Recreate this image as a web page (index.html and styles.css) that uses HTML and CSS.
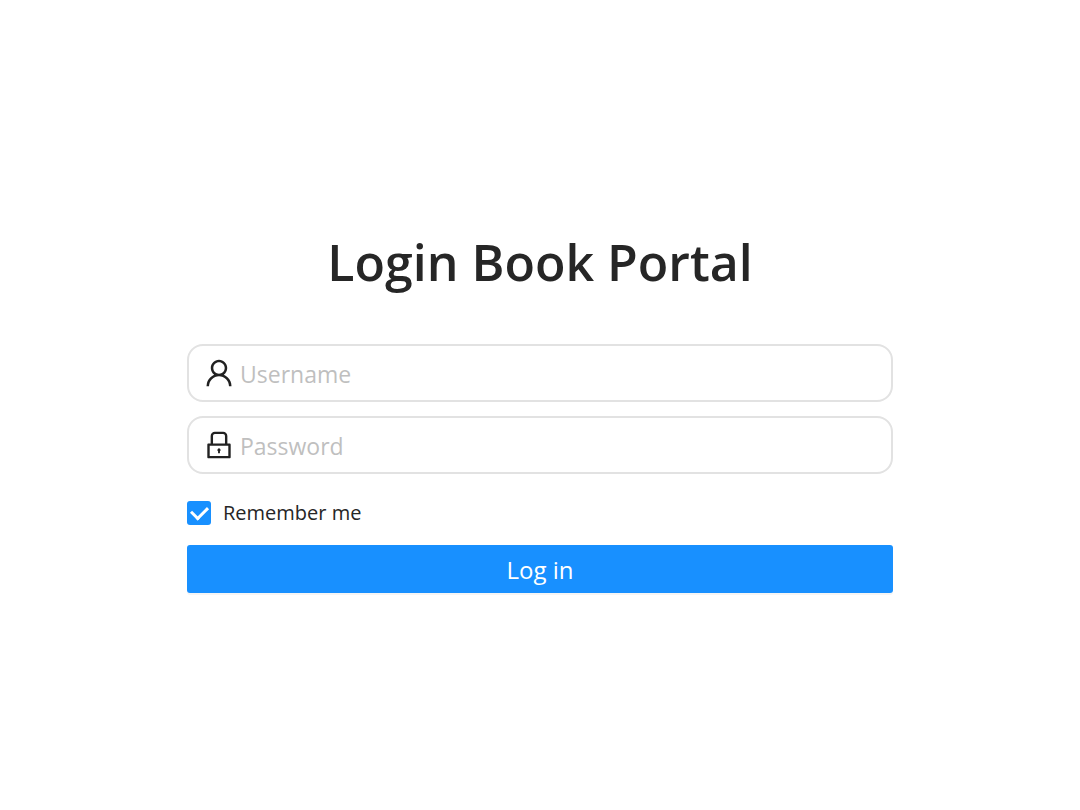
FILE: index.html
```html
<!DOCTYPE html>
<html lang="en">
<head>
<meta charset="utf-8">
<meta name="viewport" content="width=device-width, initial-scale=1">
<title>Login Book Portal</title>
<link rel="stylesheet" href="styles.css">
</head>
<body>
<main class="login">
  <h1 class="title">Login Book Portal</h1>
  <form class="form">
    <div class="field">
      <svg class="icon" viewBox="0 0 1024 1024" aria-hidden="true"><path d="M858.5 763.6a374 374 0 00-80.6-119.5 375.63 375.63 0 00-119.5-80.6c-.4-.2-.8-.3-1.2-.5C719.5 518 760 444.7 760 362c0-137-111-248-248-248S264 225 264 362c0 82.7 40.5 156 102.8 201.1-.4.2-.8.3-1.2.5-44.8 18.9-85 46-119.5 80.6a375.63 375.63 0 00-80.6 119.5A371.7 371.7 0 00136 901.8a8 8 0 008 8.2h60c4.4 0 7.9-3.5 8-7.8 2-77.2 33-149.5 87.8-204.3 56.7-56.7 132-87.9 212.2-87.9s155.5 31.2 212.2 87.9C779 752.7 810 825 812 902.2c.1 4.4 3.6 7.8 8 7.8h60a8 8 0 008-8.2c-1-47.8-10.9-94.3-29.5-138.2zM512 534c-45.9 0-89.1-17.9-121.6-50.4S340 407.9 340 362c0-45.9 17.9-89.1 50.4-121.6S466.1 190 512 190s89.1 17.9 121.6 50.4S684 316.1 684 362c0 45.9-17.9 89.1-50.4 121.6S557.9 534 512 534z"/></svg>
      <input class="input" type="text" name="username" placeholder="Username" aria-label="Username">
    </div>
    <div class="field">
      <svg class="icon" viewBox="0 0 1024 1024" aria-hidden="true"><path d="M832 464h-68V240c0-70.7-57.3-128-128-128H388c-70.7 0-128 57.3-128 128v224h-68c-17.7 0-32 14.3-32 32v384c0 17.7 14.3 32 32 32h640c17.7 0 32-14.3 32-32V496c0-17.7-14.3-32-32-32zM332 240c0-30.9 25.1-56 56-56h248c30.9 0 56 25.1 56 56v224H332V240zm460 600H232V536h560v304zM484 701v53c0 4.4 3.6 8 8 8h40c4.4 0 8-3.6 8-8v-53a48.1 48.1 0 10-56 0z"/></svg>
      <input class="input" type="password" name="password" placeholder="Password" aria-label="Password">
    </div>
    <div class="remember">
      <input class="checkbox" type="checkbox" id="remember" checked>
      <label for="remember">Remember me</label>
    </div>
    <button class="submit" type="submit">Log in</button>
  </form>
</main>
</body>
</html>
```
FILE: styles.css
```css
* {
  box-sizing: border-box;
}

body {
  margin: 0;
  background: #fff;
  color: #262626;
  font-family: "Segoe UI", "Open Sans", "Noto Sans", sans-serif;
}

.login {
  display: flex;
  flex-direction: column;
  align-items: center;
  justify-content: center;
  gap: 46px;
  min-height: 100vh;
  padding: 28px 24px 20px;
}

.title {
  margin: 0;
  font-size: 50px;
  font-weight: 600;
  line-height: 72px;
  text-align: center;
}

.form {
  display: flex;
  flex-direction: column;
  width: 100%;
  max-width: 706px;
}

.field {
  display: flex;
  align-items: center;
  gap: 4px;
  height: 58px;
  margin-bottom: 14px;
  padding: 0 15px 0 13px;
  border: 2px solid #e2e2e2;
  border-radius: 16px;
}

.icon {
  flex: none;
  width: 34px;
  height: 34px;
  fill: #212121;
}

.input {
  flex: 1;
  min-width: 0;
  padding: 2px 0 0;
  border: 0;
  outline: 0;
  background: transparent;
  color: inherit;
  font: 23px/36px "Segoe UI", "Open Sans", "Noto Sans", sans-serif;
}

.input::placeholder {
  color: #bfbfbf;
  opacity: 1;
}

.remember {
  display: flex;
  align-items: center;
  gap: 12px;
  margin: 9px 0 16px;
  font-size: 20px;
  line-height: 32px;
}

.checkbox {
  appearance: none;
  flex: none;
  display: grid;
  place-items: center;
  width: 24px;
  height: 24px;
  margin: 0;
  border-radius: 3px;
  background: #1890ff;
}

.checkbox:not(:checked) {
  border: 2px solid #dedede;
  background: #fff;
}

.checkbox:checked::before {
  content: "";
  width: 8px;
  height: 13px;
  margin: 0 0 3px 1px;
  border: solid #fff;
  border-width: 0 3px 3px 0;
  transform: rotate(45deg);
}

.submit {
  height: 48px;
  padding: 2px 16px 0;
  border: 0;
  border-radius: 3px;
  background: #1890ff;
  box-shadow: 0 2px 0 rgba(0, 0, 0, 0.04);
  color: #fff;
  font: 24px/36px "Segoe UI", "Open Sans", "Noto Sans", sans-serif;
  cursor: pointer;
}
```
